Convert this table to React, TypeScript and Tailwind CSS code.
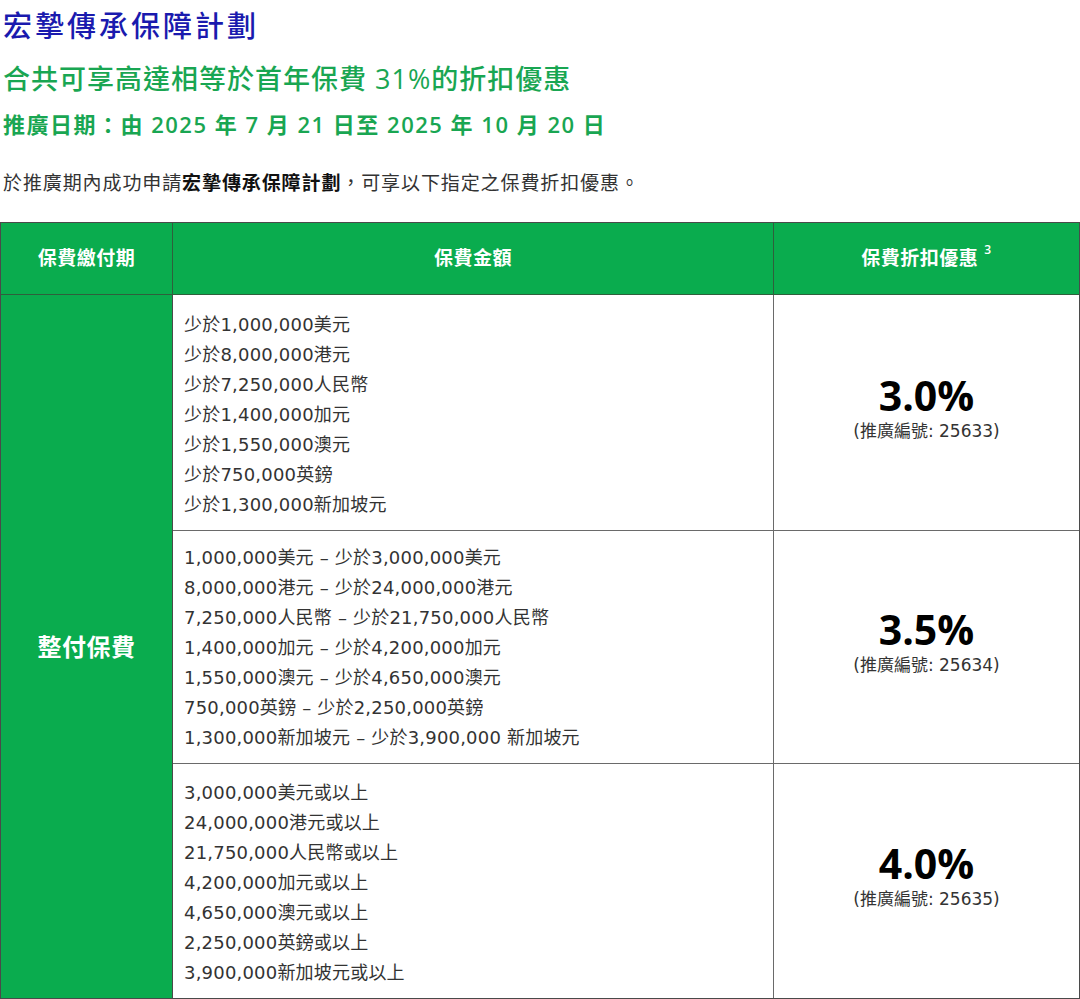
const font = { fontFamily: '"Open Sans", "Noto Sans CJK TC", sans-serif' };
const bodyFont = { fontFamily: '"DejaVu Sans", "Noto Sans CJK TC", sans-serif' };

interface Tier {
  lines: string[];
  rate: string;
  code: string;
  pad: string;
}

const tiers: Tier[] = [
  {
    lines: [
      "少於1,000,000美元",
      "少於8,000,000港元",
      "少於7,250,000人民幣",
      "少於1,400,000加元",
      "少於1,550,000澳元",
      "少於750,000英鎊",
      "少於1,300,000新加坡元",
    ],
    rate: "3.0%",
    code: "25633",
    pad: "pt-[15px] pb-[10px] border-b",
  },
  {
    lines: [
      "1,000,000美元 – 少於3,000,000美元",
      "8,000,000港元 – 少於24,000,000港元",
      "7,250,000人民幣 – 少於21,750,000人民幣",
      "1,400,000加元 – 少於4,200,000加元",
      "1,550,000澳元 – 少於4,650,000澳元",
      "750,000英鎊 – 少於2,250,000英鎊",
      "1,300,000新加坡元 – 少於3,900,000 新加坡元",
    ],
    rate: "3.5%",
    code: "25634",
    pad: "pt-[12px] pb-[10px] border-b",
  },
  {
    lines: [
      "3,000,000美元或以上",
      "24,000,000港元或以上",
      "21,750,000人民幣或以上",
      "4,200,000加元或以上",
      "4,650,000澳元或以上",
      "2,250,000英鎊或以上",
      "3,900,000新加坡元或以上",
    ],
    rate: "4.0%",
    code: "25635",
    pad: "pt-[14px] pb-[10px]",
  },
];

export default function App() {
  return (
    <div className="w-[1080px] min-h-[999px] bg-white text-[#222]" style={font}>
      <div className="px-[3px] pt-[6px]">
        <h1 className="text-[29px] leading-[40px] tracking-[3px] font-medium text-[#1a1aae]">宏摯傳承保障計劃</h1>
        <h2 className="mt-[16px] text-[27px] leading-[34px] tracking-[1px] font-medium text-[#19a652]">
          合共可享高達相等於首年保費 31%的折扣優惠
        </h2>
        <h3 className="mt-[12px] text-[22px] leading-[32px] tracking-[1.5px] font-semibold text-[#19a652]">
          推廣日期：由 2025 年 7 月 21 日至 2025 年 10 月 20 日
        </h3>
        <p className="mt-[29px] text-[19px] leading-[28px] tracking-[0.9px] text-[#333]">
          於推廣期內成功申請<span className="font-bold text-[#111]">宏摯傳承保障計劃</span>，可享以下指定之保費折扣優惠。
        </p>
      </div>

      <div className="mt-[25px] grid grid-cols-[172px_601px_1fr] border border-[#4a4a4a] w-[1080px]">
        <div className="h-[72px] bg-[#0aac4e] border-r border-b border-[#2f5f3c] flex items-center justify-center text-white text-[19px] font-semibold tracking-[0.5px]">
          保費繳付期
        </div>
        <div className="h-[72px] bg-[#0aac4e] border-r border-b border-[#2f5f3c] flex items-center justify-center text-white text-[19px] font-semibold tracking-[0.5px]">
          保費金額
        </div>
        <div className="h-[72px] bg-[#0aac4e] border-b border-[#2f5f3c] flex items-center justify-center text-white text-[19px] font-semibold tracking-[0.5px]">
          保費折扣優惠<sup className="ml-[6px] text-[12px] -top-[9px]">3</sup>
        </div>

        <div className="row-span-3 bg-[#0aac4e] border-r border-[#4a4a4a] flex items-center justify-center text-white text-[24px] font-semibold tracking-[0.5px]">
          整付保費
        </div>
        {tiers.map((t) => (
          <div key={t.code} className="contents">
            <div
              className={"pl-[11px] border-r border-[#6a6a6a] text-[18px] leading-[30px] tracking-[0.2px] text-[#333] " + t.pad}
              style={bodyFont}
            >
              {t.lines.map((l) => (
                <div key={l}>{l}</div>
              ))}
            </div>
            <div
              className={
                "flex flex-col items-center justify-center pb-[12px] border-[#6a6a6a] " +
                (t.pad.includes("border-b") ? "border-b" : "")
              }
            >
              <div className="text-[41px] leading-[48px] font-bold text-black">{t.rate}</div>
              <div className="text-[17px] leading-[24px] text-[#333]" style={bodyFont}>
                (推廣編號: {t.code})
              </div>
            </div>
          </div>
        ))}
      </div>
    </div>
  );
}
